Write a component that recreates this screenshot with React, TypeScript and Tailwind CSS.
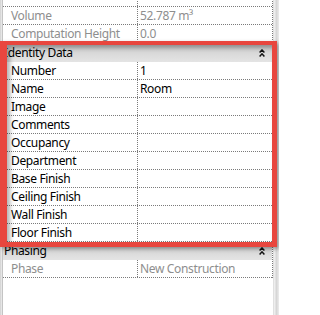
const font = { fontFamily: '"Segoe UI", "Noto Sans", "Open Sans", sans-serif' };

type Row = { label: string; value?: string; muted?: boolean; clipped?: boolean };

const topRows: Row[] = [
  { label: 'Unbounded Height', value: '3000.0', muted: true, clipped: true },
  { label: 'Volume', value: '52.787 m³', muted: true },
  { label: 'Computation Height', value: '0.0', muted: true },
];

const identityRows: Row[] = [
  { label: 'Number', value: '1' },
  { label: 'Name', value: 'Room' },
  { label: 'Image' },
  { label: 'Comments' },
  { label: 'Occupancy' },
  { label: 'Department' },
  { label: 'Base Finish' },
  { label: 'Ceiling Finish' },
  { label: 'Wall Finish' },
  { label: 'Floor Finish' },
];

const phasingRows: Row[] = [{ label: 'Phase', value: 'New Construction', muted: true }];

const Collapse = () => (
  <svg width="6" height="8" viewBox="0 0 6 8" className="mr-[7px]">
    <path d="M0.6 3.6 L3 1 L5.4 3.6 M0.6 7.4 L3 4.8 L5.4 7.4" fill="none" stroke="#111" strokeWidth="1.5" />
  </svg>
);

const PropRow = ({ row }: { row: Row }) => (
  <div
    className={`flex h-[18px] border-b border-dotted border-[#7a7a7a] text-[12px] leading-[17px] tracking-[-0.35px] ${
      row.muted ? 'text-[#8e8e8e]' : 'text-black'
    }`}
  >
    <div className="w-[135px] shrink-0 border-r border-dotted border-[#7a7a7a] pl-[8px] whitespace-nowrap overflow-hidden">
      <span className={row.clipped ? 'relative -top-[6px]' : ''}>{row.label}</span>
    </div>
    <div className="flex-1 pl-[2px] whitespace-nowrap overflow-hidden">
      <span className={row.clipped ? 'relative -top-[6px]' : ''}>{row.value}</span>
    </div>
  </div>
);

const Group = ({ title, h }: { title: string; h: string }) => (
  <div
    className={`flex items-center justify-between ${h} bg-gradient-to-b from-[#c8c8c8] via-[#d8d8d8] to-[#e4e4e4] text-[12px] tracking-[-0.35px] text-black`}
  >
    <span className="pl-[1px]">{title}</span>
    <Collapse />
  </div>
);

export default function App() {
  return (
    <div className="relative w-[279px] h-[315px] overflow-hidden bg-white" style={font}>
      <div className="flex h-full">
        <div className="w-[3px] shrink-0 bg-gradient-to-r from-[#cfcfcf] to-[#eeeeee] border-r border-[#c4c4c4]" />
        <div className="w-[270px] shrink-0 -mt-[11px] border-r border-dotted border-[#7a7a7a] self-start">
          {topRows.map((r) => (
            <PropRow key={r.label} row={r} />
          ))}
          <Group title="Identity Data" h="h-[19px]" />
          {identityRows.map((r) => (
            <PropRow key={r.label} row={r} />
          ))}
          <Group title="Phasing" h="h-[18px]" />
          {phasingRows.map((r) => (
            <PropRow key={r.label} row={r} />
          ))}
        </div>
        <div className="flex-1 bg-gradient-to-r from-[#f4f4f4] via-[#d6d6d6] to-[#ececec] border-l border-[#e0e0e0]" />
      </div>

      {/* annotation box */}
      <div className="absolute left-0 top-[41px] w-[277px] h-[206px] border-[#e8463e] border-t-4 border-l-[7px] border-r-[5px] border-b-[5px] shadow-[inset_3px_3px_4px_rgba(0,0,0,0.3),2px_2px_4px_rgba(0,0,0,0.35)]" />
    </div>
  );
}
